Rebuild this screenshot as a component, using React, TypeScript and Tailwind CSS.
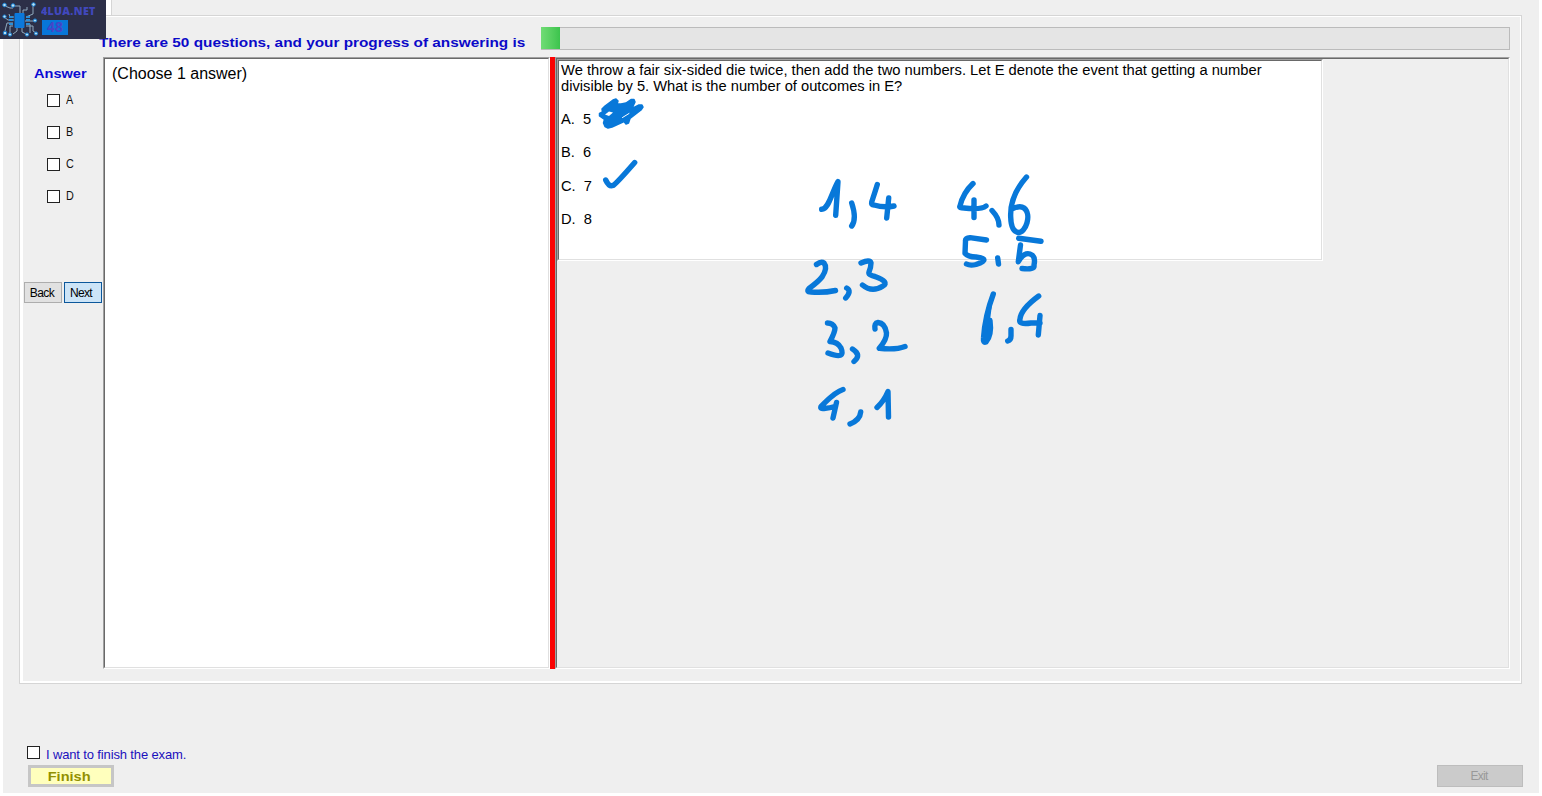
import React from "react";

function Sunken({ className, inner, children }: { className: string; inner: string; children?: React.ReactNode }) {
  return (
    <section className={`border border-t-[#a0a0a0] border-l-[#a0a0a0] border-r-white border-b-white ${className}`}>
      <div className={`h-full w-full border border-t-[#696969] border-l-[#696969] border-r-[#e0e0e0] border-b-[#e0e0e0] ${inner}`}>{children}</div>
    </section>
  );
}

function Option({ label }: { label: string }) {
  return (
    <label className="flex h-8 items-center pl-6">
      <span className="size-[13px] border border-[#222] bg-white" />
      <span className="ml-1.5 origin-left scale-x-90 text-[12px] leading-4 text-[#111]">{label}</span>
    </label>
  );
}

function Logo() {
  return (
    <div className="absolute left-0 top-0 flex h-[39px] w-[106px] bg-[#2c2f48]">
      <svg className="h-[39px] w-[39px] shrink-0" viewBox="0 0 39 39" fill="none">
        <g stroke="#8fa9bd" strokeWidth="1">
          <path d="M5 6 10 8H13M14 6H20V14M33 6V14L26 17M4 17 8 20H14M14 17H10L9 14M13 23H7L5 31M13 26H10V33M17 28V31L13 34M22 28V32L26 34M26 24H30V33M25 21H34M26 26H33V31L36 33M23 14V10H27V7" />
        </g>
        <rect x="14.500" y="13" width="10" height="15" rx="1" fill="#0b78dc" />
        <path d="M9 17h4M9 20h4M9 24h4M26 17h4M26 20h4M26 24h4" stroke="#2b8ed8" strokeWidth="2" />
        <g fill="#b7e2f5" stroke="#157bd0" strokeWidth="1">
          <circle cx="4.500" cy="5" r="1.800" /><circle cx="13" cy="5.500" r="1.800" /><circle cx="33.500" cy="4.500" r="1.800" />
          <circle cx="4.500" cy="16.500" r="1.600" /><circle cx="35" cy="20.500" r="1.600" /><circle cx="5" cy="33" r="1.800" />
          <circle cx="10" cy="34.500" r="1.600" /><circle cx="27" cy="34.500" r="1.600" /><circle cx="36" cy="33.500" r="1.600" />
        </g>
      </svg>
      <div className="flex flex-col pl-[2px] pt-[5px]">
        <span className="origin-left scale-x-[1.06] whitespace-nowrap font-['Open_Sans',sans-serif] text-[10px] font-extrabold leading-[13px] tracking-[0.3px] text-[#4148bd]">4LUA.NET</span>
        <span className="ml-px mt-[2px] h-[15px] w-[26px] bg-[#0876d8] text-center font-['Open_Sans',sans-serif] text-[14px] font-bold leading-[14px] text-[#4545c8]">48</span>
      </div>
    </div>
  );
}

function Ink() {
  return (
    <svg className="pointer-events-none absolute left-[590px] top-[90px]" width="470" height="345" viewBox="590 90 470 345" fill="none" stroke="#0878d9" strokeWidth="5.400" strokeLinecap="round" strokeLinejoin="round">
      <path fill="#0878d9" strokeWidth="1.500" d="M602 109 605 106 613 100 616 99 618 101 617 104 621 104 626 103 631 99.500 634 99.500 635 102 632 108.500 639 105 642 105 643 107 641 110 630 118.500 628.500 123 626 124 624 121.500 612 127 608 128 605 126.500 603.500 123 604.500 119.500 599.500 116 599.500 113.500 602.500 112Z" />
      <path fill="#fff" stroke="none" d="M605 114.500 609 111.500 613 112.500 609 116Z" />
      <path stroke="#fff" strokeWidth="1" d="M622.500 117.500 629 113.500" />
      <path d="M605.700 180Q609 187 613 185.500Q616 184 634.700 162.500" />
      <path d="M821.700 209.300C829 209 831 194 838 181.500L835.700 215.300" />
      <path d="M851.700 203Q857 219 851.700 226" />
      <path d="M877.300 184.500Q875 192 871.700 202Q871 205 874 205Q884 208 894 206M888.700 198 886.700 218" />
      <path d="M816.500 264.500Q821 261 824 263Q828 268 822 277Q818 282 809 288.500Q806 292 811 292Q824 293 835.500 290.500" />
      <path d="M846.700 288Q852 291 845.700 298" />
      <path d="M861 263Q870 259 871 263Q871 267 869 272Q868 275 875 276.500Q890 282 883 286Q872 293 862.500 285" />
      <path d="M827.500 323Q833 323 835 328Q835 332 830 341.500Q838 342 841 348Q846 360 828 353" />
      <path d="M852.500 349Q862 355 854 361.500" />
      <path d="M875 329Q874 323 878 322.500Q885 323 886.500 333Q887 339 879.300 348.300Q896 350 905 346.500" />
      <path d="M843 389.500C833 393 827 401 821 406.500Q820 409 824 408.500Q830 408 835 406.500M836.500 402.500 833 418" />
      <path d="M860.700 412Q860 420 850 424" />
      <path d="M877 407.500Q884 401 888 391.500L888.500 417" />
      <path d="M973 183.500Q963 193 960 206Q959 208 964 208Q981 210 986 206M974 200V217.500" />
      <path d="M992 210.500Q999 218 999 225" />
      <path d="M1026.500 177C1015 190 1010 202 1010.700 217Q1011 231 1018 232.500C1026 233 1032 214 1024 208Q1020 205 1011.700 209" />
      <path d="M986.500 240 970 237.700Q965 238 965.500 241L965 253.300Q968 257 976 257Q992 259 976 264.500Q970 266 966.500 264" />
      <path d="M997.700 258 998.500 264" />
      <path d="M1018.700 238.300 1041 241.300M1020.500 245 1018.300 261.700Q1024 252 1030 254Q1036 256 1034 265Q1035 270 1022 268.500" />
      <path fill="#0878d9" d="M993.300 294Q985 316 983.500 338Q983 343 986 342Q992 335 990 320.500" />
      <path d="M1011 329.500V336Q1011 340 1007.700 341" />
      <path d="M1038.700 296Q1021 309 1020 319Q1018 325 1031 323L1040 323M1040 315.500 1038.300 335" />
    </svg>
  );
}

export default function App() {
  return (
    <div className="relative h-[796px] w-[1542px] overflow-hidden bg-white pl-[3px] font-['Liberation_Sans',Arial,sans-serif] text-black">
      <main className="h-[793px] w-[1536px] bg-[#efefef] pl-4">
        <div className="flex h-[15px] pl-[87px]">
          <div className="w-[5px] bg-white" />
          <div className="flex-1 border-l border-[#d5d5d5]" />
        </div>
        <section className="h-[669px] w-[1503px] border border-[#d5d5d5]">
          <div className="h-full border border-b-2 border-l-[3px] border-white">
            <header className="flex h-[40px] pt-[10px]">
              <h1 className="w-[518px] pl-[76px] pt-[8px] text-[13px] font-bold leading-4 text-[#0b09c8]">
                <span className="inline-block origin-left scale-x-[1.18] whitespace-nowrap">There are 50 questions, and your progress of answering is</span>
              </h1>
              <div className="h-[23px] w-[969px] border border-[#bbb] bg-[#e5e5e5]">
                <div className="-ml-px -mt-px h-[22px] w-[19px] bg-linear-to-r from-[#70dc75] to-[#3bc44d]" />
              </div>
            </header>
            <div className="flex h-[612px]">
              <aside className="flex w-[80px] flex-col">
                <h2 className="h-[27px] pl-[11px] pt-[9px] text-[13px] font-bold leading-4 text-[#0b09d4]">
                  <span className="inline-block origin-left scale-x-[1.12]">Answer</span>
                </h2>
                <Option label="A" />
                <Option label="B" />
                <Option label="C" />
                <Option label="D" />
                <div className="mt-[70px] flex gap-[2px] pl-px">
                  <button className="h-[21px] w-[38px] border border-[#adadad] bg-[#e1e1e1] pr-0.5 text-[12px] leading-[20px] tracking-[-0.5px]">Back</button>
                  <button className="h-[21px] w-[38px] border border-[#0b579b] bg-[#cce4f7] pr-1 text-[12px] leading-[20px] tracking-[-0.7px]">Next</button>
                </div>
              </aside>
              <Sunken className="w-[447px]" inner="bg-white pl-[7px] pt-[4px] text-[16px] leading-[22px]">
                <span className="whitespace-nowrap">(Choose 1 answer)</span>
              </Sunken>
              <div className="w-[5px] bg-[#fa0202]" />
              <Sunken className="w-[955px]" inner="">
                <Sunken className="h-[202px] w-[766px]" inner="bg-white pl-[2px] pt-px text-[14.67px] leading-4">
                  <p className="w-[740px]">
                    <span className="inline-block origin-left scale-x-[1.005] whitespace-nowrap">We throw a fair six-sided die twice, then add the two numbers. Let E denote the event that getting a number</span>
                    <span className="inline-block origin-left scale-x-[1.002] whitespace-nowrap">divisible by 5. What is the number of outcomes in E?</span>
                  </p>
                  <ul className="mt-[17px] flex flex-col gap-[17.300px] whitespace-pre">
                    <li>A.  5</li>
                    <li>B.  6</li>
                    <li>C.  7</li>
                    <li>D.  8</li>
                  </ul>
                </Sunken>
              </Sunken>
            </div>
          </div>
        </section>
        <footer className="flex items-end justify-between pl-2 pr-4 pt-[61px]">
          <div>
            <label className="flex h-[20px] items-start">
              <span className="mt-px size-[13px] border border-[#222] bg-white" />
              <span className="ml-[6px] mt-px origin-left whitespace-nowrap text-[13px] leading-[18px] tracking-[-0.14px] text-[#1b10bd]">I want to finish the exam.</span>
            </label>
            <button className="ml-px block h-[22px] w-[86px] border-[3px] border-[#c6c6c6] bg-[#ffffbd] pr-1 text-[13px] font-bold leading-[18px] text-[#929000]">
              <span className="inline-block scale-x-[1.12]">Finish</span>
            </button>
          </div>
          <button className="h-[22px] w-[86px] border border-[#bdbdbd] bg-[#cbcbcb] pr-0.5 text-[12px] leading-5 tracking-[-0.7px] text-[#999]">Exit</button>
        </footer>
      </main>
      <Logo />
      <Ink />
    </div>
  );
}
